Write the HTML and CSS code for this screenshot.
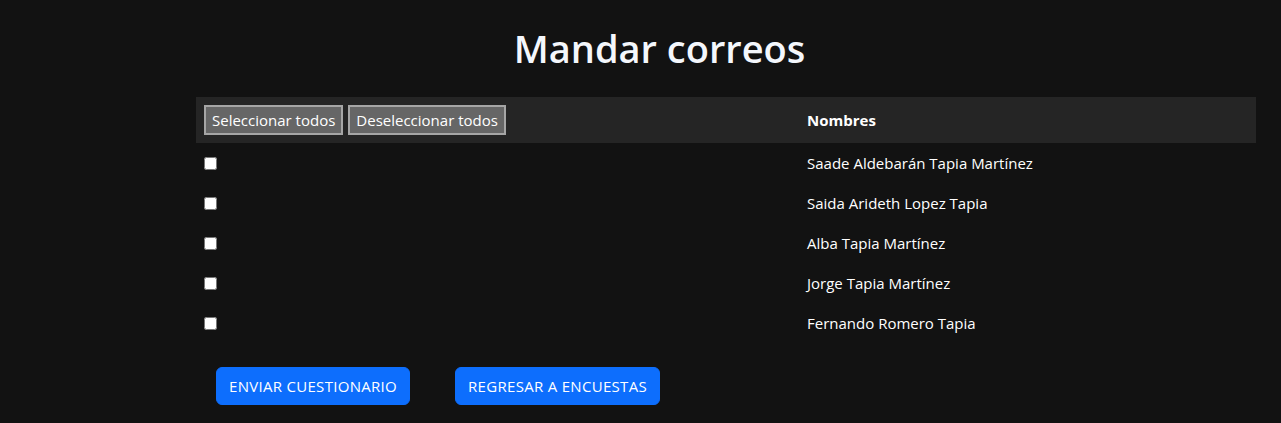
FILE: index.html
```html
<!DOCTYPE html>
<html lang="es">
<head>
<meta charset="utf-8">
<title>Mandar correos</title>
<link rel="stylesheet" href="styles.css">
</head>
<body>
<main class="page">
  <h1 class="title">Mandar correos</h1>
  <table class="mail-table">
    <thead>
      <tr>
        <th class="col-check">
          <div class="select-actions">
            <button type="button" class="plain-btn">Seleccionar todos</button>
            <button type="button" class="plain-btn">Deseleccionar todos</button>
          </div>
        </th>
        <th class="col-name">Nombres</th>
      </tr>
    </thead>
    <tbody>
      <tr><td><input type="checkbox" class="check"></td><td>Saade Aldebarán Tapia Martínez</td></tr>
      <tr><td><input type="checkbox" class="check"></td><td>Saida Arideth Lopez Tapia</td></tr>
      <tr><td><input type="checkbox" class="check"></td><td>Alba Tapia Martínez</td></tr>
      <tr><td><input type="checkbox" class="check"></td><td>Jorge Tapia Martínez</td></tr>
      <tr><td><input type="checkbox" class="check"></td><td>Fernando Romero Tapia</td></tr>
    </tbody>
  </table>
  <div class="actions">
    <button type="button" class="primary-btn">ENVIAR CUESTIONARIO</button>
    <button type="button" class="primary-btn">REGRESAR A ENCUESTAS</button>
  </div>
</main>
</body>
</html>
```
FILE: styles.css
```css
html, body {
  margin: 0;
  padding: 0;
  background: #121212;
}
body {
  font-family: "Open Sans", "Noto Sans", sans-serif;
  color: #ffffff;
  font-size: 15px;
  line-height: 24px;
}
.page {
  padding: 24px 25px 0 196px;
}
.title {
  margin: 0 0 25px -117px;
  padding-right: 16px;
  font-size: 38px;
  line-height: 48px;
  font-weight: 600;
  text-align: center;
  color: #f4f7fc;
}
.mail-table {
  width: 1060px;
  border-collapse: collapse;
}
.mail-table thead tr {
  background: #252525;
}
.mail-table th {
  text-align: left;
  font-weight: 700;
  padding: 8px 8px;
}
.mail-table td {
  padding: 8px 8px;
  vertical-align: middle;
}
.col-check {
  width: 587px;
}
.select-actions {
  display: flex;
  gap: 5px;
}
.plain-btn {
  font-family: inherit;
  font-size: 15px;
  line-height: 22px;
  font-weight: 400;
  color: #ffffff;
  background: #666666;
  border: 2px solid #a6a6a6;
  padding: 2px 6px;
  border-radius: 0;
}
.check {
  margin: 0;
  width: 13px;
  height: 13px;
  display: block;
}
.actions {
  display: flex;
  gap: 45px;
  padding: 24px 0 0 20px;
}
.primary-btn {
  font-family: inherit;
  font-size: 15px;
  line-height: 24px;
  letter-spacing: 0.3px;
  color: #ffffff;
  background: #0d6efd;
  border: 1px solid #0d6efd;
  border-radius: 6px;
  padding: 6px 12px;
}
```
